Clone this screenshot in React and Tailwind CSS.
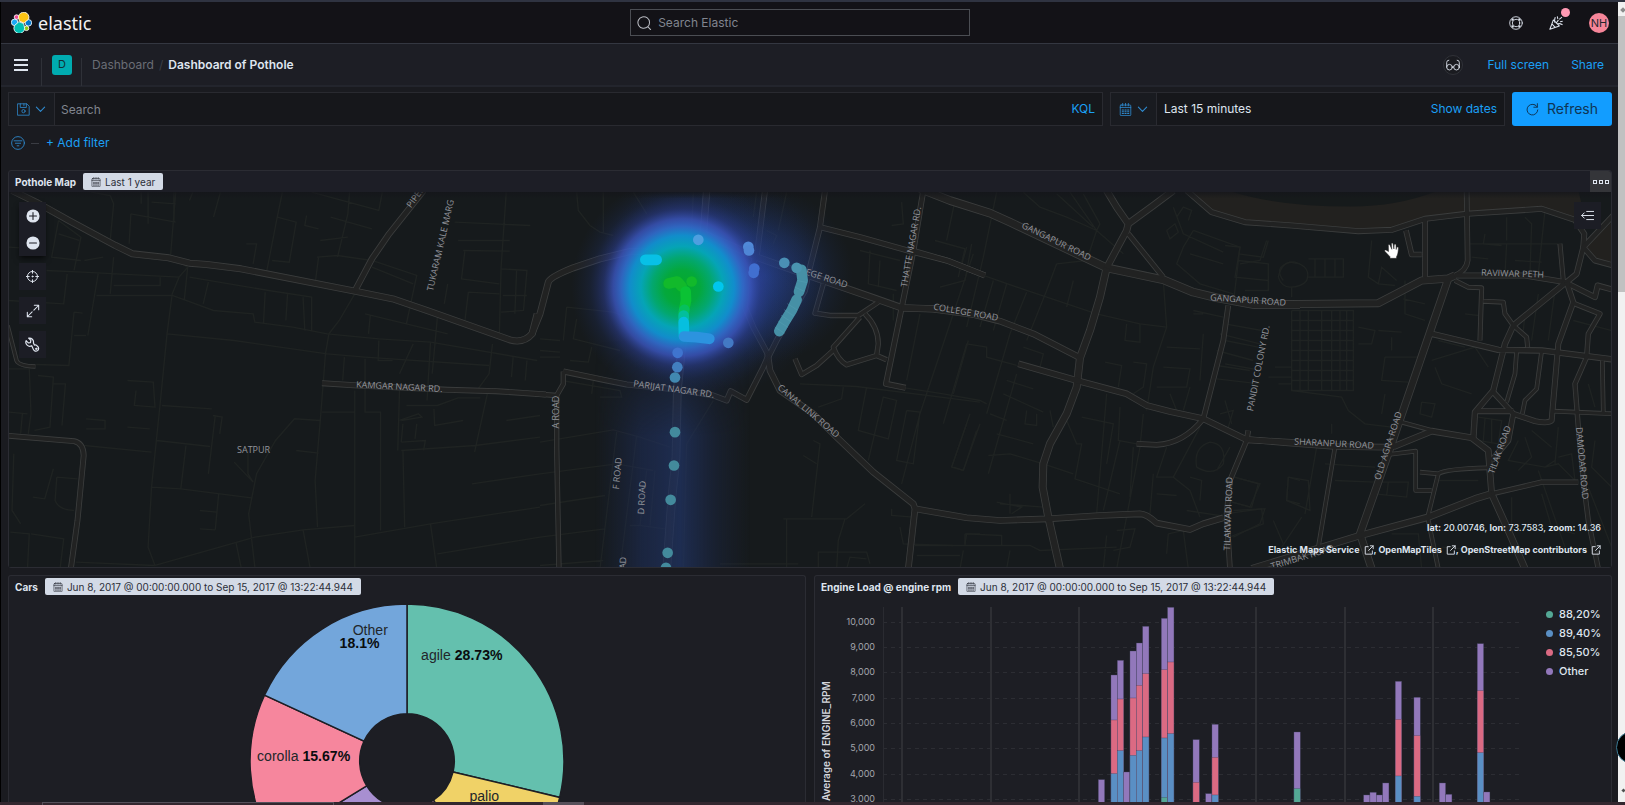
import React from "react";

const NEAR = "translate(540 180) scale(.3333)";
const WEST = "translate(0 160) scale(.3444 .3333)";
const MID = "translate(900 180) scale(.3333)";
const EAST = "translate(1225 180) scale(.3333)";

const ROADS = [
  [WEST, 17, "M35 90 110 128 200 180 335 255 385 280 490 292 550 308 600 312 700 325 1030 392 1140 415 1240 450 1480 538Q1520 550 1545 520L1560 460"],
  [WEST, 15, "M1030 392 1080 295 1130 220 1230 90"],
  [WEST, 14, "M935 668 1040 675 1300 688 1440 692 1585 702"],
  [WEST, 13, "M25 826 215 842Q242 848 243 885L225 1080 205 1230"],
  [WEST, 9, "M22 495 48 600Q55 617 103 618"],
  [NEAR, 17, "M-25 462 0 400 25 305Q30 290 100 262L180 235 270 213 310 212 440 270"],
  [NEAR, 14, "M70 573 200 600 260 612 420 628 520 645 560 660 572 632 620 658 670 560 683 530"],
  [NEAR, 12, "M-15 640 50 645 70 610 70 573M50 645 50 800 57 1170"],
  [NEAR, 18, "M500 30 490 160 560 190 650 230 740 262 850 300 1000 352 1085 382 1180 385 1320 404"],
  [NEAR, 14, "M490 160 455 270 430 500M675 30 652 215 620 300 615 380 640 440 683 520M855 30 840 140 810 260 795 330 710 480 685 530"],
  [NEAR, 14, "M840 140 960 170 1110 212 1220 240 1335 285"],
  [NEAR, 14, "M1150 30 1120 212 1085 382 1038 610 1097 622"],
  [NEAR, 16, "M683 520 690 570 720 630 820 700 890 770 1000 875 1120 970 1125 985M1125 985 1105 1165"],
  [NEAR, 12, "M850 310 825 398 870 405 955 405 1015 365M975 400Q1015 440 1015 490L1010 525 920 553Q895 540 880 500L960 410M1010 525 1040 538M880 510 830 555 785 582 765 535"],
  [NEAR, 22, "M425 500 412 630 408 830 395 960 380 1170"],
  [MID, 22, "M60 25 150 60 270 98 330 125 620 262 790 298 880 335 950 352 1060 372 1200 372"],
  [MID, 16, "M5 382 100 385 200 397 300 422 400 460 540 532"],
  [MID, 14, "M30 208 150 243 255 285"],
  [MID, 20, "M620 262 600 350 570 450 540 532 530 620 500 700 450 790 430 850 428 920 445 1010 480 1165"],
  [MID, 16, "M355 550 530 600 680 640 740 675 810 693 910 715 1040 778 1200 787"],
  [MID, 18, "M620 262 680 150 685 130 760 75 820 30M620 30 650 80 685 130"],
  [MID, 13, "M685 160 790 290M985 375 970 480 910 715Q850 790 770 793L710 790M1045 750 1040 780 990 900 980 1000 990 1165"],
  [MID, 16, "M45 985 200 1012 300 1020 445 1015 600 1005 720 1000Q740 1000 770 1028L870 1047 910 1030 970 1012"],
  [EAST, 20, "M85 372 460 368 590 300 670 294 690 285M670 294 620 440 490 820 405 1060 440 1165"],
  [EAST, 14, "M-115 30 -40 95 60 125 200 135 400 152 500 148 600 115 725 100 950 85 1050 118 1078 160 1075 200"],
  [EAST, 13, "M725 30 728 240Q725 270 690 285M600 115 600 290M543 150 560 222 590 222"],
  [EAST, 14, "M690 285 900 285 1020 305 1110 350 1118 315 1165 328M1165 105 1075 200 1055 280 1025 305M1075 200 1110 240 1165 255"],
  [EAST, 11, "M690 300 730 320 770 322 765 480M775 362 835 365 840 400 865 435 905 470 908 500M1005 190 1015 300"],
  [EAST, 15, "M1020 308 865 435 840 490 805 630 750 695 745 775M620 460 820 508 950 510 1165 537"],
  [EAST, 14, "M1025 305 1045 365 1000 490 980 720Q970 730 930 722L865 700 805 635M755 692 865 692M865 700 850 780 800 840"],
  [EAST, 12, "M1045 368 1125 400 1090 460 1085 530 1050 610 1060 740 1075 900 1090 1020 1120 1165"],
  [EAST, 10, "M875 512 870 580 845 665M950 512 935 625 900 660 892 700M985 692 1165 700M1132 540 1135 695"],
  [EAST, 16, "M70 777 200 788 330 798 480 800 510 797 620 752 740 772 790 810 800 940"],
  [EAST, 10, "M530 725 640 755M490 822 572 812 572 930 620 930M585 875 640 880Q660 865 790 862M640 880 608 1010 640 1165M330 800 280 1100"],
  [EAST, 18, "M80 1165 405 1065 610 1010 750 955 800 940M800 940 850 1050 900 1165"],
  [EAST, 12, "M800 940 950 905 1060 905"],
];

const LANES = [
  [WEST, "M510 95 495 290 545 320 520 350 500 400 485 520 465 730 440 980 430 1160 450 1215M485 520 680 540 950 580 1060 590 1420 615M1030 400 985 480 955 520 945 580 930 780 915 960 922 1100M470 735 615 745M455 840 610 858M440 980 525 985 730 1012M540 855 525 985M625 765 605 940M618 765 645 770 638 820M740 1220 722 1060 745 940 800 840 855 775 930 780M720 870 720 940 735 965M680 905 735 965M635 1000 625 1108M580 1050 630 1055M580 1105 625 1108M450 1215 740 1130 880 1108 1030 1095M880 1108 900 1220M220 1205 450 1215"],
  [WEST, "M135 330 240 335 520 350M280 405 500 405 540 420 620 450 735 460 740 485 850 500 950 520 1100 535 1250 545 1560 600M285 340 255 525M330 290 320 400M330 375 465 375 465 350M550 350 780 390 905 410 905 510M545 320 535 420M605 365 590 430M770 395 765 490M835 400 830 480M880 410 885 510M1060 595 1060 755 1105 755 1105 1110M1030 690 1030 1220M1030 1130 1250 1090 1568 1040M1000 590 995 660M935 755 1030 755M1160 690 1155 870M1165 870 1380 855 1568 830M1180 735 1270 735 1330 712 1395 712M1415 700 1378 875M1370 970 1568 940M1250 1090 1268 1222M1270 1180 1568 1130M1470 780 1568 765M1170 870 1175 1100M860 870 925 878M685 1145 700 1220"],
  [WEST, "M265 95 320 105 330 130 320 240M380 160 375 250M380 160 510 185M410 95 410 130M430 95 430 190M440 125 510 130M505 95 505 185M560 95 550 120M640 95 620 170M715 250 745 250 735 310M820 95 805 170 775 330M805 170 860 185 840 305 790 300M890 165 885 195 925 205M905 95 1100 150 1110 95M1015 95 1010 160 980 290M930 240 1010 230M960 170 1080 205M920 290 980 285 1080 300 1210 345 1180 490M925 290 915 370M1080 320 1200 370M1320 185 1540 195M1470 95 1455 320 1450 520M1330 240 1480 240M1345 270 1480 272M1350 270 1340 355 1450 370M1360 395 1450 400M1360 395 1350 480M1455 325 1530 330 1520 450 1455 455M1500 330 1495 460M1460 405 1530 405M1300 370 1290 430M1270 470 1255 640M1250 545 1240 720M1060 460 1300 520M1075 465 1070 520M1100 540 1098 600 1140 600M1200 550 1160 640M1430 550 1420 640 1385 690M1490 590 1485 650M1530 600 1525 660"],
  [WEST, "M170 180 235 230 215 330M170 180 150 290 235 300M170 220 230 240M245 300 300 290M25 420 185 430 195 340M215 455 240 458M215 525 250 525M215 455 200 615 105 612M25 260 60 262M25 625 85 625 90 760 82 820M25 755 80 760M65 760 60 820M110 645 155 650 145 800 100 810M155 670 190 670 180 795M370 660 445 665 450 740 390 735 395 690M250 775 305 780 305 805 250 805M370 800 435 805M245 855 440 875M165 950 225 955M165 950 160 1020Q170 1048 215 1050M95 1010 130 1015 155 925M90 1120 185 1135 175 1220M30 1115 85 1120 80 1220M40 880 35 1050 60 1090M1160 780 1215 760 1225 770 1165 780M1165 845 1235 840 1230 870M1170 790 1165 845M1210 790 1205 835M1260 745 1262 795 1345 780"],
  [NEAR, "M110 35 115 90 150 135 180 155 220 165M190 35 190 155M280 35 320 100M460 35 455 150M650 35 640 110M740 35 715 150M680 150 710 165 700 190M0 475 60 480M0 510 60 515M0 530 60 530M80 380 220 395 340 440M80 380 70 480M110 415 100 475 240 510M155 500 145 545 90 540M65 600 240 630 245 650 180 650M160 600 155 640M0 785 220 748 300 770 390 800M0 880 230 850 340 870M0 975 195 945M0 1070 195 1045M230 755 180 1165M290 765 240 1165M320 870 300 1035 375 1045M440 790 430 1165M345 870 330 1035M520 660 440 790M270 1035 300 1035M0 1155 190 1140"],
  [NEAR, "M730 1015 920 1015 975 970M915 1015 895 1080 890 1165M740 1015 740 1165M820 780 840 790 815 1010M790 825 830 850M780 610 950 618 1320 665M980 620 955 750 1045 775 1070 660 1030 650 985 840M910 620 905 655 835 680M1300 220 1140 700 1085 910M1100 690 1140 695 1120 850 1070 840 1100 690M1285 480 1240 640M1280 730 1235 860 1270 870 1310 750M540 1150 775 1150M835 1165 835 1115 980 1115 990 1150M920 1165 930 1130 980 1135M1055 985 1055 1005 1120 1010M1080 1040 1090 1090 1240 1095M1275 1090 1280 1060 1320 1060M960 210 1080 240M990 210 985 310 1070 330M1020 240 1015 320M1060 340 1060 420M1085 65 1090 130 1055 135M1185 180 1275 205 1255 290M1245 60 1220 180"],
  [MID, "M290 35 250 230 200 440M370 35 420 80 500 110 590 150M510 35 590 150 560 240M550 40 600 130M600 130 590 150 670 220M470 40 580 140M560 240 470 250M470 250 440 330 380 480M520 300 500 380M250 285 380 330 590 400 720 430 800 440M200 200 180 270M215 190 195 300 120 320M280 300 240 440M320 310 280 450M380 335 330 460 260 700M200 490 260 500 260 530 350 555M200 490 130 730M370 500 430 520 420 560M320 600 400 625M310 640 430 695M350 580 265 880M270 700 320 720M160 860 190 870 240 730M155 860 210 700M290 760 400 790M265 825 330 820 430 850 520 880M380 690 375 730 410 735 410 700M450 690 460 740M0 620 130 640 240 660 260 670M60 400 20 600"],
  [MID, "M500 720 530 790 545 790 525 895 660 940M545 710 640 730 620 850M620 640 590 1000M660 680 655 780 710 790M730 700 720 800 650 1165M615 545 665 555 655 620M700 545 740 550 730 620 700 640M790 300 800 440 760 560 740 690M800 500 900 505M790 560 870 565 860 620 770 620M810 640 830 690M880 400 910 400M880 390 970 410M960 460 1080 490M950 510 1060 540M950 555 1050 570M950 595 1080 610M910 460 900 600M870 620 850 690M680 430 675 480 720 485 720 430M660 780 610 990M760 880 750 1000M700 800 690 950M800 800 770 890 820 890 870 930 900 1010M820 890 900 740M870 890 905 900 900 960M770 940 830 945M860 990 990 1010M990 800 950 870M890 860Q880 800 930 785 980 790 970 850 940 890 890 860M1000 890 1080 910 1050 980 980 960M1000 990 1095 985 1080 1030 1000 1070M1165 890 1200 900M1165 890 1160 960 1200 970M960 700 1000 690 985 740"],
  [MID, "M45 1095 390 1095 420 1110 650 1100M195 1060 305 1065 305 1095M195 1060 195 1095M330 1110 320 1165M190 1110 180 1165M650 1050 705 1045 690 1100 640 1110M620 1065 610 1165M805 1060 850 1050 865 1165M805 1060 800 1120M1120 1020 1150 1090M50 1125 180 1125M290 965 365 980 335 1000M330 940 330 1000M300 970 430 980M880 150 1020 200 1000 370M850 200 830 250 900 310 1000 340M870 220 970 250M880 150 850 200M830 110 850 80 875 90 865 120M800 150 825 130 835 155 810 175 800 150M820 80 850 160 970 215M1150 300Q1120 260 1170 245 L1200 250M1100 180 1080 240 1020 250"],
  [EAST, "M0 195 45 200 30 290 130 300M130 180 115 230 40 220M40 240 130 250 130 330 60 330M160 290Q170 240 210 245 260 260 245 300 230 320 195 320 170 320 160 290M250 235 355 235 355 290 250 290M270 235 270 290M300 235 300 290M330 235 330 290M200 320 200 350M440 180 430 290 460 310 510 315M460 310 470 260 515 300M540 300 540 400 600 420M535 355 600 370M845 110 845 180M730 190 1000 190M845 190 840 280M780 160 775 190 830 195M900 110 920 130 915 280M960 90 940 280M740 230 790 235M870 240 950 245M990 330 970 480M940 340 920 480M900 400 895 450M1045 420 1160 450M720 400 760 405"],
  [EAST, "M200 390 385 390 385 630 200 630 200 390M200 420 385 420M200 450 385 450M200 480 385 480M200 510 385 510M200 540 385 540M200 570 385 570M200 600 385 600M225 390 225 630M250 390 250 630M290 390 290 630M320 390 320 630M345 390 345 630M365 390 365 630M130 590 200 590M150 560 200 560M160 610 200 610M0 430 110 450M0 480 100 500M0 550 110 570M200 630 350 650 370 690 420 730 500 740M480 530 580 530M480 530 470 600 550 605M400 440 450 450 440 490 400 490M460 450 530 455M500 470 500 510M590 665 630 670 620 710 585 700 590 665M480 640 470 700M640 480 720 500M630 560 650 610 740 640M620 540 750 500 790 560"],
  [EAST, "M275 800 240 1000M190 890 250 900 255 990 185 960 190 890M30 890 100 910 80 980 0 960M0 1000 110 985 115 1030 0 1075M460 905 550 905 545 950 450 940 460 905M490 905 485 945M640 900 760 900M880 780 850 840 960 860 990 840M900 770 920 830 880 870M1000 830 1040 820 1050 900 1000 850 960 860M940 870 1020 1100M860 950 860 1060M950 940 980 1040 1050 1060M1000 740 990 850M1090 610 1110 680M1090 920 1160 1100M1110 780 1100 860 1160 920M760 710 830 720 820 790 760 780M780 715 775 780M800 715 800 790M920 750 980 800M650 1100 780 1110M500 1060 580 1060 590 1165M300 850 450 860M330 900 450 905M320 730 320 760M0 660 20 730M230 1010 170 1100"],
];

const LABELS = [
  ["PIPEL", 411, 208, -54],
  ["TUKARAM KALE MARG", 433, 291, -77],
  ["KAMGAR NAGAR RD.", 356, 387, 3],
  ["SATPUR", 237, 452, 0],
  ["A ROAD", 559, 428, -90],
  ["F ROAD", 619, 489, -85],
  ["D ROAD", 644, 514, -87],
  ["D ROAD", 625, 590, -88],
  ["PARIJAT NAGAR RD.", 633, 386, 8],
  ["EGE ROAD", 805, 274, 18],
  ["THATTE NAGAR RD.", 907, 287, -80],
  ["COLLEGE ROAD", 933, 309, 10],
  ["GANGAPUR ROAD", 1021, 227, 26],
  ["GANGAPUR ROAD", 1210, 300, 4],
  ["PANDIT COLONY RD.", 1253, 411, -79],
  ["TILAKWADI ROAD", 1230, 550, -88],
  ["SHARANPUR ROAD", 1294, 444, 3],
  ["OLD AGRA ROAD", 1380, 480, -72],
  ["RAVIWAR PETH", 1481, 275, 2],
  ["TILAK ROAD", 1494, 474, -70],
  ["DAMODAR ROAD", 1576, 427, 85],
  ["CANAL LINK ROAD", 777, 388, 40],
  ["TRIMBAK ROAD", 1272, 569, -17],
];

const DOTS = [
  ["#4e9fe0", 475, 178], ["#5089d8", 625, 199], ["#4f86d6", 627, 210], ["#416fd0", 643, 264], ["#416fd0", 641, 277],
  ["#4a8fb5", 733, 247], ["#4a94b0", 770, 262], ["#00c6ee", 535, 318], ["#12b92b", 455, 303], ["#4379c4", 565, 487],
  ["#3f74cf", 413, 517], ["#427fc0", 412, 560], ["#4188b0", 405, 591], ["#438a9c", 405, 755], ["#438a9c", 402, 855],
  ["#438a9c", 392, 958], ["#438a9c", 383, 1117], ["#438a9c", 378, 1162],
];

const TRAILS = [
  ["#08c0e6", "M316 238 350 238"],
  ["#12b92b", "M386 309 412 303 425 318"],
  ["#0ac234", "M437 333 438 360 433 385"],
  ["#06c05c", "M433 388 431 398"],
  ["#02bf9c", "M431 405 431 415"],
  ["#06bfdf", "M431 425 432 465"],
  ["#2c93df", "M432 468 470 470 508 475"],
  ["#4690a6", "M784 268 788 300 777 334M770 358 755 390 735 422 718 452"],
];

function PotholeMap() {
  return (
    <svg viewBox="9 191 1602 376" preserveAspectRatio="xMidYMid slice" className="block h-full w-full" role="img" aria-label="Pothole heat map">
      <defs>
        <radialGradient id="heat">
          <stop offset="0" stopColor="#04aa2a" />
          <stop offset=".16" stopColor="#04a83c" />
          <stop offset=".27" stopColor="#03a770" />
          <stop offset=".37" stopColor="#05a4b6" />
          <stop offset=".47" stopColor="#1190cf" stopOpacity=".97" />
          <stop offset=".55" stopColor="#316bcb" stopOpacity=".92" />
          <stop offset=".62" stopColor="#3a55bd" stopOpacity=".82" />
          <stop offset=".71" stopColor="#2d419a" stopOpacity=".5" />
          <stop offset=".83" stopColor="#22377a" stopOpacity=".22" />
          <stop offset="1" stopColor="#1b2b55" stopOpacity="0" />
        </radialGradient>
        <radialGradient id="haze">
          <stop offset="0" stopColor="#2c4aa8" stopOpacity=".62" />
          <stop offset=".5" stopColor="#24408c" stopOpacity=".35" />
          <stop offset="1" stopColor="#1b2b55" stopOpacity="0" />
        </radialGradient>
        <linearGradient id="column">
          <stop offset="0" stopColor="#1c2a50" stopOpacity="0" />
          <stop offset=".3" stopColor="#1f2f5c" stopOpacity=".55" />
          <stop offset=".55" stopColor="#213463" stopOpacity=".75" />
          <stop offset=".8" stopColor="#1e2c55" stopOpacity=".3" />
          <stop offset="1" stopColor="#1c2a50" stopOpacity="0" />
        </linearGradient>
        <linearGradient id="fade" x1="0" y1="0" x2="0" y2="1">
          <stop offset="0" stopColor="#000" />
          <stop offset=".4" stopColor="#fff" />
        </linearGradient>
        <mask id="columnMask"><rect x="580" y="340" width="180" height="240" fill="url(#fade)" /></mask>
        <linearGradient id="shade" x1="0" y1="0" x2="0" y2="1">
          <stop offset="0" stopColor="#14151a" stopOpacity=".8" />
          <stop offset="1" stopColor="#14151a" stopOpacity="0" />
        </linearGradient>
      </defs>
      <rect x="0" y="180" width="1640" height="400" fill="#161a1c" />
      <g transform={EAST}>
        <path d="M-115 30-40 95 60 125 400 150 510 145 600 115 725 100 950 85 1050 118 1075 90 1060 30Z" fill="#22211f" />
        <path d="M10 30Q150 78 380 78 520 78 640 30Z" fill="#161a1b" />
        <path d="M1085 195 1165 120 1165 245 1110 235Z" fill="#22211f" />
      </g>
      <g fill="none" stroke="#1f2322" strokeWidth="4">
        {LANES.map(([t, d], i) => <path key={i} transform={t} d={d} />)}
      </g>
      <g fill="none" stroke="#3b3d3d" strokeLinejoin="round">
        {ROADS.map(([t, w, d], i) => <path key={i} transform={t} d={d} strokeWidth={w + 4} />)}
      </g>
      <g fill="none" stroke="#212222" strokeLinejoin="round">
        {ROADS.map(([t, w, d], i) => <path key={i} transform={t} d={d} strokeWidth={w - 1} />)}
      </g>
      <rect x="595" y="340" width="155" height="240" fill="url(#column)" mask="url(#columnMask)" />
      <circle cx="765" cy="275" r="88" fill="url(#haze)" />
      <circle cx="712" cy="282" r="115" fill="url(#haze)" />
      <circle cx="682" cy="287" r="111" fill="url(#heat)" />
      <g fill="#92949b" fontFamily='"Open Sans", Inter, sans-serif' fontSize="9">
        {LABELS.map(([s, x, y, a], i) => <text key={i} transform={`translate(${x} ${y}) rotate(${a})`}>{s}</text>)}
      </g>
      <g transform={NEAR} fill="none" strokeWidth="32" strokeLinecap="round" strokeLinejoin="round">
        {TRAILS.map(([c, d], i) => <path key={i} stroke={c} d={d} />)}
        {DOTS.map(([c, x, y], i) => <circle key={i} cx={x} cy={y} r="16" fill={c} stroke="none" />)}
        <path d="M705 440 733 458M715 422 743 440M724 405 752 423M733 388 761 406M743 370 771 388M765 320 792 332M772 300 800 306" stroke="#5aa6b8" strokeWidth="1" />
      </g>
      <rect x="0" y="191" width="1640" height="7" fill="url(#shade)" />
      <g transform="translate(1385 242)" fill="#fff" stroke="#222" strokeWidth=".5">
        <path d="M3.500 9 1 7.600C-.3 7-.9 8.400.3 9.300L5 14.200V15.800H11.500V14.200C12.800 12 13.200 10 13.400 5.400 13.500 4.200 11.900 4 11.600 5.200L11.200 7 11 2.500C10.900 1.200 9.300 1.200 9.200 2.500L8.900 6.500 8 1.200C7.800 0 6.200.2 6.400 1.500L6.800 6.800 4.900 2.600C4.300 1.400 2.900 2 3.400 3.300Z" />
      </g>
    </svg>
  );
}

const BARS = [
  [895, { p: 644 }], [933, { p: 330, r: 465, b: 626 }], [952, { p: 286, r: 402, b: 557 }], [971, { p: 621 }],
  [990, { p: 258, r: 399, b: 571 }], [1009, { p: 234, r: 361, b: 557 }], [1028, { p: 184, r: 326, b: 516 }],
  [1084, { p: 160, r: 314, b: 519, g: 697 }], [1103, { p: 127, r: 291, b: 506 }], [1179, { p: 524, r: 652 }],
  [1217, { p: 686 }], [1236, { p: 478, r: 577, b: 690 }], [1482, { p: 501, g: 671 }], [1691, { p: 690 }],
  [1710, { p: 682 }], [1729, { p: 690 }], [1748, { p: 654 }], [1786, { p: 349, r: 463, b: 633 }],
  [1842, { p: 397, r: 512, b: 694 }], [1918, { p: 654 }], [1937, { p: 688 }], [2032, { p: 236, r: 377, b: 563 }], [2051, { p: 681 }],
];
const INK = { p: "#9278bb", r: "#db6a83", b: "#5a8fc4", g: "#54a895" };

function EngineChart() {
  return (
    <svg viewBox="815 597 710 350" className="block w-full min-w-0 flex-1" preserveAspectRatio="xMinYMin meet" role="img" aria-label="Average of ENGINE_RPM by engine load">
      <g stroke="#2c2d33" strokeDasharray="4 4">
        {[622, 647, 672, 698, 723, 748, 774, 799, 824, 850].map((y) => <path key={y} d={`M883 ${y + 0.5}H1521`} />)}
      </g>
      <path d="M883.500 607V900" stroke="#2a2b31" />
      <path d="M902 607V900M991 607V900M1079 607V900M1168 607V900M1256 607V900M1345 607V900M1433 607V900" stroke="#2e2f34" strokeWidth="2" />
      <g transform="translate(800 565) scale(.3333)">
        {BARS.map(([x, s]) =>
          ["p", "r", "b", "g"].filter((k) => s[k] !== undefined).map((k) => (
            <rect key={x + k} x={x} y={s[k]} width="19" height={1000 - s[k]} fill={INK[k]} stroke="#3d3f5a" strokeWidth="1" />
          ))
        )}
      </g>
      <g fill="#a3a5ac" fontFamily="Inter, sans-serif" fontSize="9" textAnchor="end">
        {[10, 9, 8, 7, 6, 5, 4, 3].map((n, i) => <text key={n} x="875" y={[625, 650, 675, 701, 726, 751, 777, 802][i]}>{n},000</text>)}
      </g>
      <text transform="translate(830 801) rotate(-90)" fill="#d4d6dd" fontFamily="Inter, sans-serif" fontWeight="600" fontSize="10">Average of ENGINE_RPM</text>
    </svg>
  );
}

const SLICES = [
  [0, 103.4, "#64c0ae"], [103.4, 146, "#f0d267"], [146, 172, "#cf91ad"], [172, 238.4, "#a88fd1"], [238.4, 294.8, "#f6869d"], [294.8, 360, "#73a6db"],
];
function slicePath(a, b) {
  const at = (deg, r) => {
    const t = (deg * Math.PI) / 180;
    return `${(407 + r * Math.sin(t)).toFixed(2)} ${(760 - r * Math.cos(t)).toFixed(2)}`;
  };
  const big = b - a > 180 ? 1 : 0;
  return `M${at(a, 156)}A156 156 0 ${big} 1 ${at(b, 156)}L${at(b, 47)}A47 47 0 ${big} 0 ${at(a, 47)}Z`;
}
function CarsPie() {
  return (
    <svg viewBox="248 597 318 330" className="mx-auto block w-80 shrink-0" role="img" aria-label="Cars by share">
      {SLICES.map(([a, b, c]) => <path key={a} d={slicePath(a, b)} fill={c} stroke="#1d1e24" strokeWidth="1.500" />)}
      <g fill="#22262a" fontFamily='"Liberation Sans", Arial, sans-serif' fontSize="14">
        <text x="353" y="635">Other</text>
        <text x="340" y="648" fill="#0a0c0e" fontWeight="700">18.1%</text>
        <text x="421" y="660">agile <tspan fill="#0a0c0e" fontWeight="700">28.73%</tspan></text>
        <text x="258" y="760">corolla <tspan fill="#0a0c0e" fontWeight="700">15.67%</tspan></text>
        <text x="469" y="800">palio</text>
      </g>
    </svg>
  );
}

const Icon = ({ size = "size-4", box = 16, children }) => (
  <svg viewBox={`0 0 ${box} ${box}`} className={`${size} shrink-0`} fill="none" stroke="currentColor" strokeLinecap="round" strokeLinejoin="round" aria-hidden="true">{children}</svg>
);
const Calendar = ({ size = "size-[10px]" }) => (
  <Icon size={size}>
    <path d="M2.500 2.500h11a1 1 0 0 1 1 1v11a1 1 0 0 1-1 1h-11a1 1 0 0 1-1-1v-11a1 1 0 0 1 1-1zM1.500 5.500h13M4.500.5v3M8 .5v3M11.500.5v3" />
    <path d="M4 8.500h1.500M7.300 8.500h1.500M10.600 8.500h1.500M4 10.700h1.500M7.300 10.700h1.500M10.600 10.700h1.500M4 13h1.500M7.300 13h1.500M10.600 13h1.500" strokeWidth="1.300" />
  </Icon>
);
const Chevron = () => <Icon size="size-[11px]" box={12}><path d="M1.500 3.500 6 8l4.500-4.500" strokeWidth="1.200" /></Icon>;
const Popout = () => (
  <Icon size="size-[10px]" box={12}><path d="M5 2H1.500v9H10V7M7.500 1H11v3.500M11 1 5.500 6.500" strokeWidth="1.100" /></Icon>
);

function ElasticLogo() {
  return (
    <svg viewBox="0 0 32 32" className="size-[21px]" aria-hidden="true" stroke="#fff" strokeWidth="1.300">
      <ellipse cx="8.500" cy="7.800" rx="3.600" ry="3.500" fill="#f04e98" />
      <circle cx="5.500" cy="15.800" r="5" fill="#1ba9f5" />
      <circle cx="26.500" cy="16.500" r="5" fill="#0077cc" />
      <ellipse cx="23.600" cy="24.800" rx="3.600" ry="3.500" fill="#93c90e" />
      <path d="M12.600 13.700 19.800 17 27 10.600A8 8 0 1 0 11.400 7.300Z" fill="#fec514" />
      <path d="M5 21.500a8.200 8.200 0 1 0 15.800 3.400l-1.400-7.200L12 14.700 5 21Z" fill="#00bfb3" />
    </svg>
  );
}

function Badge({ children }) {
  return (
    <span className="flex h-[17px] items-center gap-1 rounded-[2px] bg-[#d3dae6] px-2 text-[10px] leading-4 text-[#2b2e38]">
      <Calendar />{children}
    </span>
  );
}
const Title = ({ children }) => <h2 className="text-[10px] leading-4 font-bold text-[#dfe5ef]">{children}</h2>;
const ToolButton = ({ label, children }) => (
  <button aria-label={label} className="flex size-[27px] items-center justify-center bg-[#1c1d25] text-[#dfe5ef]">{children}</button>
);
const Source = ({ children }) => <a href="#source" className="inline-flex items-center gap-1">{children} <Popout /></a>;

const LEGEND = [["88,20%", "bg-[#54a895]"], ["89,40%", "bg-[#5a8fc4]"], ["85,50%", "bg-[#db6a83]"], ["Other", "bg-[#9278bb]"]];

export default function App() {
  return (
    <div className="flex h-screen flex-col overflow-hidden bg-[#1a1b20] text-xs text-[#dfe5ef] font-[Inter,sans-serif]">
      <div className="h-[2px] shrink-0 bg-[#2f3341]" />
      <div className="flex min-h-0 flex-1">
        <div className="w-px shrink-0 bg-black" />
        <div className="flex min-w-0 flex-1 flex-col overflow-hidden">
          <header className="flex h-[42px] shrink-0 items-center justify-between border-b border-[#343741] bg-[#131217] pr-[9px] pl-[10px]">
            <a href="#home" className="flex items-center gap-[6px]">
              <ElasticLogo />
              <span className="font-['Noto_Sans',sans-serif] text-lg leading-6 text-[#f2f2f4]">elastic</span>
            </a>
            <label className="flex h-[27px] w-[340px] items-center gap-[6px] border border-[#4b4d53] bg-[#131217] pl-[6px]">
              <span className="text-[#b9bbc2]"><Icon size="size-[15px]"><path d="M11.500 12.500A6.200 6.200 0 1 1 13.400 8c0 1.800-.7 3.300-1.900 4.500zM12 13l2.500 2.500" strokeWidth="1.100" /></Icon></span>
              <input type="search" aria-label="Search Elastic" placeholder="Search Elastic" className="h-full w-full bg-transparent text-xs outline-none placeholder:text-[#81858f]" />
            </label>
            <div className="flex items-center gap-[26px]">
              <button aria-label="Help"><Icon size="size-[14px]"><circle cx="8" cy="8" r="7.200" /><circle cx="8" cy="8" r="4.200" /><path d="M3.400 3.400 4.700 4.700M12.600 3.400 11.300 4.700M3.400 12.600 4.700 11.300M12.600 12.600 11.300 11.300" strokeWidth="3" strokeLinecap="butt" /></Icon></button>
              <button aria-label="What's new" className="relative">
                <Icon size="size-[14px]"><path d="M1 15.200 5 4.500l6.800 6.800zM3.300 9 7 12.900M6.500 7.200a14 14 0 0 1 .5-5.500M8.300 8l2.200-3M9.500 9.200c1.500-.8 3.500-.6 5.500.6M9.500.8 10 3M12 3.500 14.500 1.500M13 6.500l2.300-.5" strokeWidth="1.200" /></Icon>
                <span className="absolute -top-[8px] -right-[7px] size-[9px] rounded-full bg-[#ff99b3]" />
              </button>
              <button aria-label="Account" className="flex size-5 items-center justify-center rounded-full bg-[#f68599] text-[11px] leading-4 text-[#22262c]">NH</button>
            </div>
          </header>

          <nav className="flex h-[43px] shrink-0 items-center justify-between border-b-2 border-[#23252d] bg-[#1d1e25] pr-[14px] pl-[12px]">
            <div className="flex items-center">
              <button aria-label="Menu" className="flex w-[16px] flex-col gap-[3px] px-px">
                <span className="h-[2px] bg-[#dfe5ef]" /><span className="h-[2px] bg-[#dfe5ef]" /><span className="h-[2px] bg-[#dfe5ef]" />
              </button>
              <span className="mr-[10px] ml-[12px] mt-[14px] h-[28px] w-px bg-[#2f3138]" />
              <span className="flex size-5 items-center justify-center rounded-[3px] bg-[#00abb0] text-[11px] text-[#123036]">D</span>
              <span className="mr-[10px] ml-[9px] mt-[14px] h-[28px] w-px bg-[#2f3138]" />
              <a href="#dashboards" className="text-[#6a6d75]">Dashboard</a>
              <span className="mx-[5px] text-[#3c3e46]">/</span>
              <h1 className="font-semibold">Dashboard of Pothole</h1>
            </div>
            <div className="flex items-center text-[#1ba0f5]">
              <span className="mr-[25px] flex size-5 items-center justify-center rounded-full border border-[#303238] bg-[#1a1b20] text-[#dfe5ef]">
                <Icon size="size-[14px]"><circle cx="4" cy="10.500" r="3.200" /><circle cx="12" cy="10.500" r="3.200" /><path d="M7.200 10.300h1.600M.8 10.500V5Q.8 2.500 3.200 2.500M15.200 10.500V5q0-2.500-2.400-2.500" /></Icon>
              </span>
              <button className="mr-[22px]">Full screen</button>
              <button>Share</button>
            </div>
          </nav>

          <main className="flex min-h-0 flex-1 flex-col overflow-hidden px-[7px] pr-[6px] pt-[5px]">
            <div className="flex h-[34px] shrink-0">
              <div className="flex min-w-0 flex-1 items-center border border-[#292a30] bg-[#16171b]">
                <button aria-label="Saved queries" className="flex h-full items-center gap-[5px] border-r border-[#292a30] bg-[#191b20] px-2 text-[#2f8bd0]">
                  <Icon size="size-[13px]"><path d="M1 1h11l3 3v11H1zM4 1v4.500h7.500V1M8.500 1v2.500" /><circle cx="8" cy="10" r="2" /></Icon><Chevron />
                </button>
                <input aria-label="Search" placeholder="Search" className="h-full min-w-0 flex-1 bg-transparent px-[6px] outline-none placeholder:text-[#81858f]" />
                <button className="px-[7px] text-[#1ba0f5]">KQL</button>
              </div>
              <div className="ml-[7px] flex w-[395px] items-center border border-[#292a30] bg-[#16171b]">
                <button aria-label="Quick time ranges" className="flex h-full items-center gap-[5px] border-r border-[#292a30] bg-[#191b20] px-2 text-[#2f8bd0]"><Calendar size="size-[13px]" /><Chevron /></button>
                <button className="flex-1 px-[7px] text-left">Last 15 minutes</button>
                <button className="px-[7px] text-[#1ba0f5]">Show dates</button>
              </div>
              <button className="ml-[7px] flex w-[100px] items-center justify-center gap-2 rounded-[3px] bg-[#129dff] text-sm text-[#0f3554]">
                <Icon size="size-[13px]"><path d="M14.500 8.500A6.600 6.600 0 1 1 11 2.300M14 .8v4.400H9.600M14 5 11 2.300" strokeWidth="1.200" /></Icon>Refresh
              </button>
            </div>

            <div className="mt-[9px] flex h-4 shrink-0 items-center px-[3px]">
              <button aria-label="Filter options" className="text-[#2f8bd0]"><Icon size="size-[14px]"><circle cx="8" cy="8" r="7.300" /><path d="M3.500 5.500h9M5 8.300h6M7 11.200h2" /></Icon></button>
              <span className="mr-[7px] ml-[6px] h-px w-2 bg-[#3a3c43]" />
              <button className="text-[#1ba0f5]">+ Add filter</button>
            </div>

            <section className="mt-[19px] flex h-[398px] shrink-0 flex-col rounded-[3px] border border-[#2b2c33] bg-[#1d1e26]">
              <div className="flex h-[21px] shrink-0 items-center gap-[7px] pl-[6px]">
                <Title>Pothole Map</Title><Badge>Last 1 year</Badge>
                <button aria-label="Panel options" className="ml-auto flex h-full w-[21px] items-center justify-center gap-[2px] rounded-tr-[3px] bg-[#343539]">
                  <span className="size-[4px] border border-[#dfe5ef]" /><span className="size-[4px] border border-[#dfe5ef]" /><span className="size-[4px] border border-[#dfe5ef]" />
                </button>
              </div>
              <div className="relative min-h-0 flex-1 overflow-hidden">
                <PotholeMap />
                <div className="absolute top-[10px] left-[10px] flex flex-col gap-[7px]">
                  <div className="shadow-md shadow-black/50">
                    <ToolButton label="Zoom in"><Icon size="size-[14px]"><circle cx="8" cy="8" r="7.500" fill="#dfe5ef" stroke="none" /><path d="M8 4v8M4 8h8" stroke="#1c1d25" strokeWidth="1.200" /></Icon></ToolButton>
                    <ToolButton label="Zoom out"><Icon size="size-[14px]"><circle cx="8" cy="8" r="7.500" fill="#dfe5ef" stroke="none" /><path d="M4 8h8" stroke="#1c1d25" strokeWidth="1.200" /></Icon></ToolButton>
                  </div>
                  <ToolButton label="Fit to data"><Icon size="size-[13px]"><circle cx="8" cy="8" r="6.200" strokeWidth="1.200" /><circle cx="8" cy="8" r=".7" fill="currentColor" /><path d="M8 .5v3.500M8 12v3.500M.5 8H4M12 8h3.500" strokeWidth="1.200" /></Icon></ToolButton>
                  <ToolButton label="Expand"><Icon size="size-[14px]"><path d="M2 14 7 9M9 7l5-5M9.500 1.500h5v5M1.500 9.500v5h5" strokeWidth="1.200" /></Icon></ToolButton>
                  <ToolButton label="Tools"><Icon size="size-[15px]"><path d="M3.900 1.200A4.300 4.300 0 0 1 9 6.300L10 8.600a2.900 2.900 0 0 1 3.200 1.200 2.900 2.900 0 1 1-4.300 3.400L7.200 9.300A4.300 4.300 0 0 1 1.200 3.900L3.500 6.200 5.900 5.900 6.200 3.500Z" strokeWidth="1.300" /><circle cx="12" cy="12.600" r=".8" fill="currentColor" /></Icon></ToolButton>
                </div>
                <div className="absolute top-[10px] right-[10px]">
                  <ToolButton label="Layers"><Icon size="size-[13px]"><path d="M7 3h8.500M1 8h14.500M7 13h8.500M4 4.800.8 8 4 11.200" strokeWidth="1.200" /></Icon></ToolButton>
                </div>
                <p className="absolute right-[10px] bottom-[31px] text-[9px] leading-4 font-medium"><b>lat:</b> 20.00746, <b>lon:</b> 73.7583, <b>zoom:</b> 14.36</p>
                <p className="absolute right-[10px] bottom-[9px] text-[9px] leading-4 font-bold">
                  <Source>Elastic Maps Service</Source>, <Source>OpenMapTiles</Source>, <Source>OpenStreetMap contributors</Source>
                </p>
              </div>
            </section>

            <div className="mt-[7px] grid min-h-0 flex-1 grid-cols-2 gap-2">
              <section className="flex flex-col overflow-hidden rounded-t-[3px] border border-b-0 border-[#2b2c33] bg-[#1d1e24]">
                <div className="flex h-[21px] shrink-0 items-center gap-[7px] pl-[6px]"><Title>Cars</Title><Badge>Jun 8, 2017 @ 00:00:00.000 to Sep 15, 2017 @ 13:22:44.944</Badge></div>
                <CarsPie />
              </section>
              <section className="flex flex-col overflow-hidden rounded-t-[3px] border border-b-0 border-[#2b2c33] bg-[#1d1e24]">
                <div className="flex h-[21px] shrink-0 items-center gap-[7px] pl-[6px]"><Title>Engine Load @ engine rpm</Title><Badge>Jun 8, 2017 @ 00:00:00.000 to Sep 15, 2017 @ 13:22:44.944</Badge></div>
                <div className="flex items-start">
                  <EngineChart />
                  <ul className="flex w-[86px] shrink-0 flex-col gap-[3px] pt-[9px] pl-[21px] text-[11px] leading-4 font-medium">
                    {LEGEND.map(([name, dot]) => (
                      <li key={name} className="flex items-center gap-[6px]"><span className={`size-[7px] shrink-0 rounded-full ${dot}`} />{name}</li>
                    ))}
                  </ul>
                </div>
              </section>
            </div>
          </main>
        </div>

        <div className="relative w-[7px] shrink-0 bg-[#f1f1f1]" aria-hidden="true">
          <div className="mt-[14px] h-[276px] bg-[#c1c1c1]" />
          <span className="absolute top-[6px] left-[3px] size-[4px] rotate-45 bg-[#8b8b8b]" />
          <span className="absolute bottom-[10px] left-[4px] size-[3px] rotate-45 bg-[#505050]" />
          <div className="absolute inset-y-0 right-0 w-[9px] overflow-hidden">
            <div className="absolute bottom-[38px] left-0 size-[33px] rounded-full border border-[#3b7a94] bg-black" />
          </div>
        </div>
      </div>
      <div className="flex h-[3px] shrink-0 bg-[#33272f]">
        <div className="ml-[42px] w-[292px] border-t border-r border-l border-[#55505a]" />
        <div className="ml-[209px] w-[41px] bg-[#57505a]" />
      </div>
    </div>
  );
}
